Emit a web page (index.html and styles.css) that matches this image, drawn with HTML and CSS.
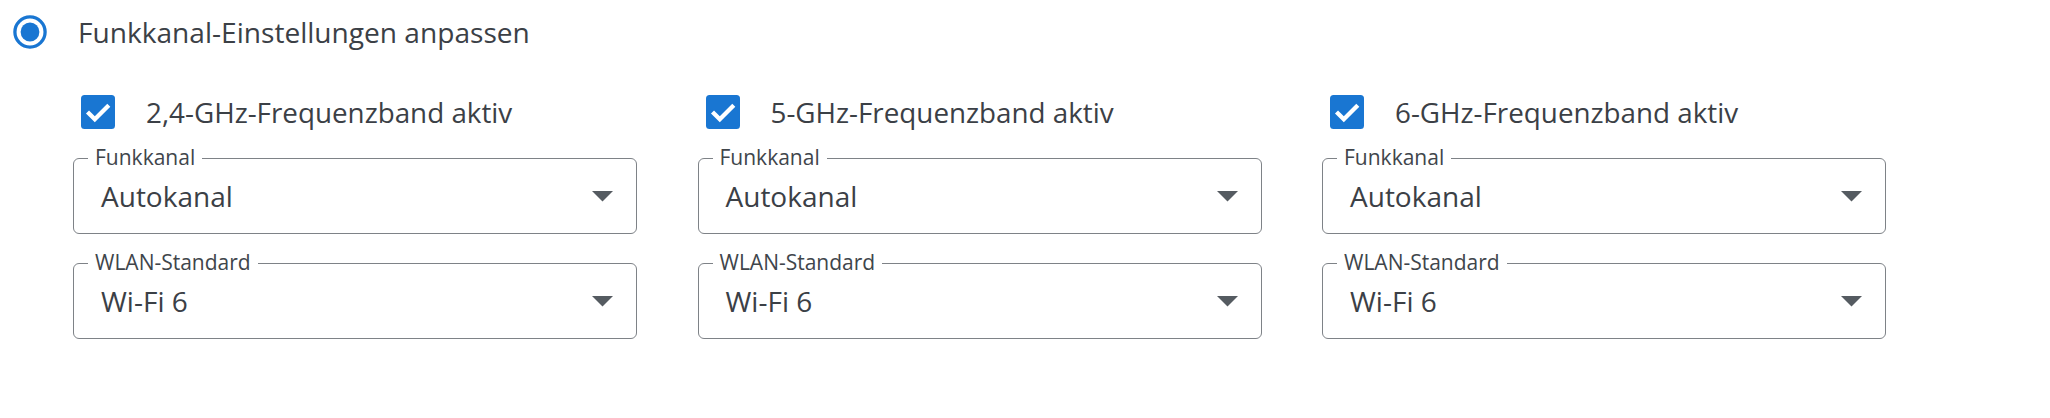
FILE: index.html
```html
<!DOCTYPE html>
<html lang="de">
<head>
<meta charset="utf-8">
<title>Funkkanal-Einstellungen</title>
<link rel="stylesheet" href="styles.css">
</head>
<body>
<div class="page">
  <div class="title-row">
    <svg class="radio" width="34" height="34" viewBox="0 0 34 34">
      <circle cx="17" cy="17" r="15.1" fill="none" stroke="#1976d2" stroke-width="3.3"/>
      <circle cx="17" cy="17" r="9.4" fill="#1976d2"/>
    </svg>
    <span class="title">Funkkanal-Einstellungen anpassen</span>
  </div>
  <div class="bands">
    <div class="band">
      <div class="check-row">
        <svg class="check" width="34" height="34" viewBox="0 0 34 34">
          <rect x="0" y="0" width="34" height="34" rx="3.5" fill="#1976d2"/>
          <polyline points="6.5,17 13.8,24.3 27.8,10.3" fill="none" stroke="#fff" stroke-width="4.3"/>
        </svg>
        <span class="check-label">2,4-GHz-Frequenzband aktiv</span>
      </div>
      <div class="select">
        <span class="select-label">Funkkanal</span>
        <span class="select-value">Autokanal</span>
        <svg class="arrow" width="21" height="11" viewBox="0 0 21 11"><polygon points="0,0 21,0 10.5,10.5" fill="#555b61"/></svg>
      </div>
      <div class="select">
        <span class="select-label">WLAN-Standard</span>
        <span class="select-value">Wi-Fi 6</span>
        <svg class="arrow" width="21" height="11" viewBox="0 0 21 11"><polygon points="0,0 21,0 10.5,10.5" fill="#555b61"/></svg>
      </div>
    </div>
    <div class="band">
      <div class="check-row">
        <svg class="check" width="34" height="34" viewBox="0 0 34 34">
          <rect x="0" y="0" width="34" height="34" rx="3.5" fill="#1976d2"/>
          <polyline points="6.5,17 13.8,24.3 27.8,10.3" fill="none" stroke="#fff" stroke-width="4.3"/>
        </svg>
        <span class="check-label">5-GHz-Frequenzband aktiv</span>
      </div>
      <div class="select">
        <span class="select-label">Funkkanal</span>
        <span class="select-value">Autokanal</span>
        <svg class="arrow" width="21" height="11" viewBox="0 0 21 11"><polygon points="0,0 21,0 10.5,10.5" fill="#555b61"/></svg>
      </div>
      <div class="select">
        <span class="select-label">WLAN-Standard</span>
        <span class="select-value">Wi-Fi 6</span>
        <svg class="arrow" width="21" height="11" viewBox="0 0 21 11"><polygon points="0,0 21,0 10.5,10.5" fill="#555b61"/></svg>
      </div>
    </div>
    <div class="band">
      <div class="check-row">
        <svg class="check" width="34" height="34" viewBox="0 0 34 34">
          <rect x="0" y="0" width="34" height="34" rx="3.5" fill="#1976d2"/>
          <polyline points="6.5,17 13.8,24.3 27.8,10.3" fill="none" stroke="#fff" stroke-width="4.3"/>
        </svg>
        <span class="check-label">6-GHz-Frequenzband aktiv</span>
      </div>
      <div class="select">
        <span class="select-label">Funkkanal</span>
        <span class="select-value">Autokanal</span>
        <svg class="arrow" width="21" height="11" viewBox="0 0 21 11"><polygon points="0,0 21,0 10.5,10.5" fill="#555b61"/></svg>
      </div>
      <div class="select">
        <span class="select-label">WLAN-Standard</span>
        <span class="select-value">Wi-Fi 6</span>
        <svg class="arrow" width="21" height="11" viewBox="0 0 21 11"><polygon points="0,0 21,0 10.5,10.5" fill="#555b61"/></svg>
      </div>
    </div>
  </div>
</div>
</body>
</html>
```
FILE: styles.css
```css
html, body {
  margin: 0;
  padding: 0;
  background: #ffffff;
}

body {
  font-family: "Open Sans", "Noto Sans", "Liberation Sans", sans-serif;
  color: #3b4046;
}

.page {
  padding: 15px 0 0 13px;
}

.title-row {
  display: flex;
  align-items: center;
  gap: 31px;
  height: 34px;
}

.radio,
.check,
.arrow {
  display: block;
  flex: none;
}

.title {
  font-size: 28.1px;
  line-height: 34px;
  white-space: nowrap;
}

.check-label {
  font-size: 27.8px;
  line-height: 34px;
  white-space: nowrap;
}

.bands {
  display: grid;
  grid-template-columns: repeat(3, 564px);
  column-gap: 60.5px;
  margin: 46px 0 0 60px;
}

.band {
  display: flex;
  flex-direction: column;
  gap: 29px;
}

.check-row {
  display: flex;
  align-items: center;
  gap: 31px;
  height: 34px;
  padding-left: 8px;
}

.select {
  position: relative;
  box-sizing: border-box;
  height: 76px;
  border: 1px solid #7e8287;
  border-radius: 6px;
  display: flex;
  align-items: center;
  padding: 0 23px 0 27px;
}

.select-label {
  position: absolute;
  left: 14px;
  top: -12px;
  padding: 0 7px;
  background: #ffffff;
  font-size: 21px;
  line-height: 21px;
  color: #40454b;
  white-space: nowrap;
}

.select-value {
  font-size: 28px;
  line-height: 34px;
  white-space: nowrap;
}

.arrow {
  margin-left: auto;
}
```
